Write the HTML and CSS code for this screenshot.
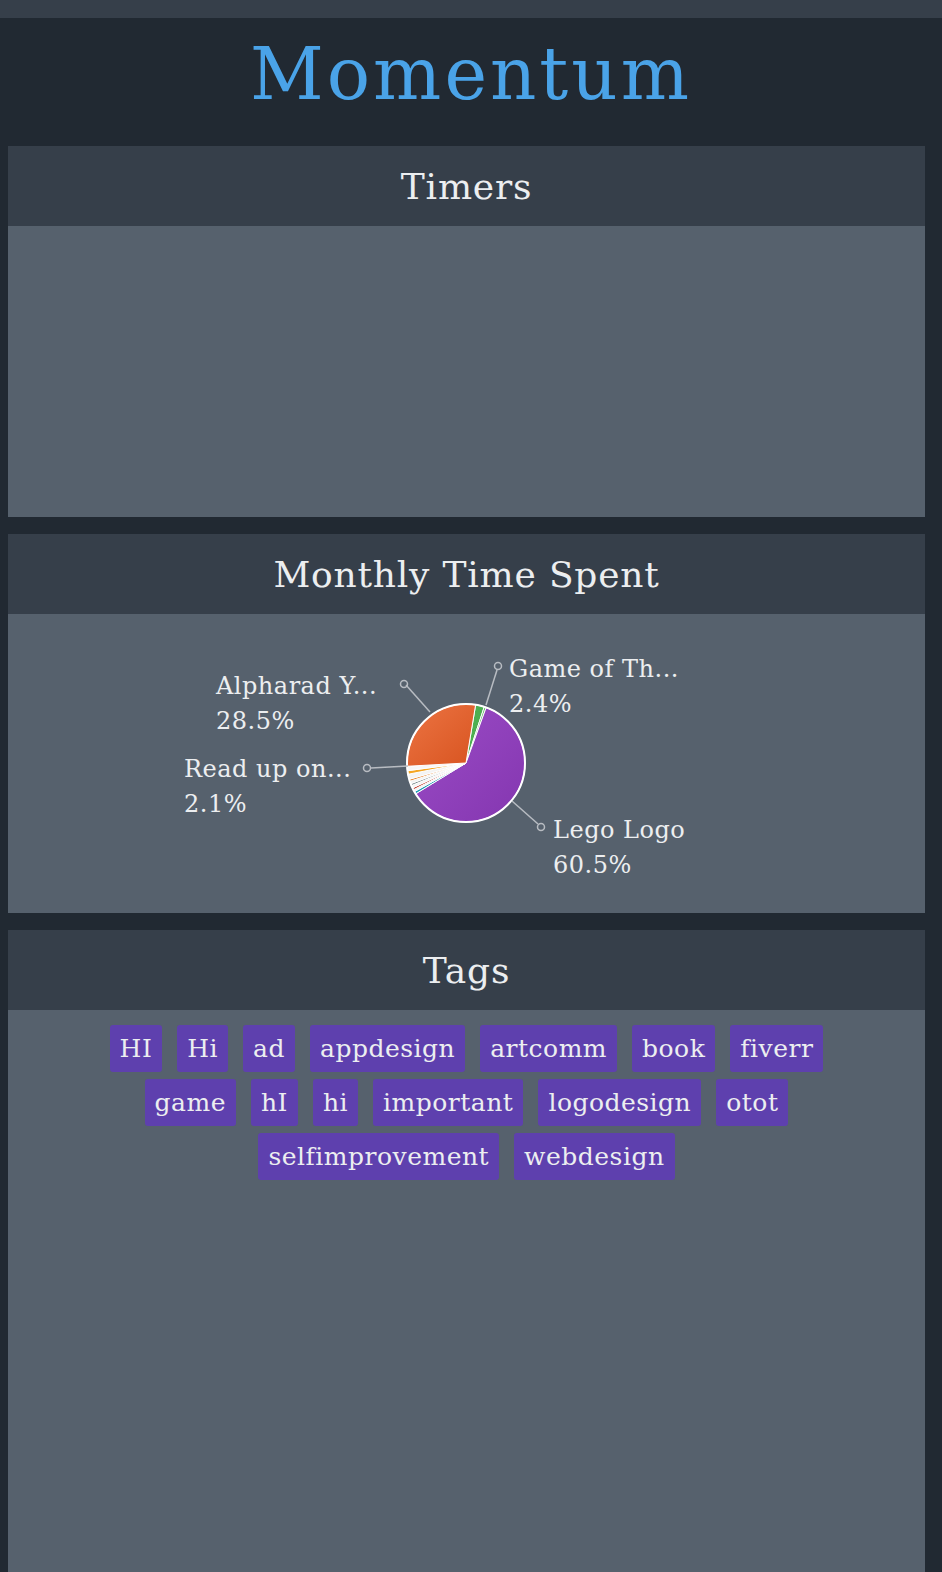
FILE: index.html
```html
<!DOCTYPE html>
<html>
<head>
<meta charset="utf-8">
<link rel="stylesheet" href="styles.css">
</head>
<body>
<div class="topbar"></div>
<header class="brand"><h1 class="brand-title">Momentum</h1></header>
<main class="panels">
  <section class="panel">
    <h2 class="panel-head">Timers</h2>
    <div class="panel-body timers-body"></div>
  </section>
  <section class="panel">
    <h2 class="panel-head">Monthly Time Spent</h2>
    <div class="panel-body chart-body">
      <svg class="pie" width="917" height="299" viewBox="0 0 917 299">
        <defs>
          <linearGradient id="gPurple" x1="0" y1="0" x2="1" y2="1">
            <stop offset="0" stop-color="#9b4cc6"/>
            <stop offset="1" stop-color="#8436b0"/>
          </linearGradient>
          <linearGradient id="gOrange" x1="0" y1="0" x2="1" y2="1">
            <stop offset="0" stop-color="#ec7443"/>
            <stop offset="1" stop-color="#d85420"/>
          </linearGradient>
        </defs>
        <g id="slices"></g>
        <g class="leaders" stroke="#b8bcc2" stroke-width="1.5" fill="none">
          <line x1="422" y1="98" x2="398" y2="71"/>
          <circle cx="396" cy="70" r="3.5"/>
          <line x1="478" y1="91" x2="489" y2="56"/>
          <circle cx="490" cy="52" r="3.5"/>
          <line x1="400" y1="152" x2="363" y2="154"/>
          <circle cx="359" cy="154" r="3.5"/>
          <line x1="504" y1="187" x2="530" y2="210"/>
          <circle cx="533" cy="213" r="3.5"/>
        </g>
        <g class="labels">
          <text x="208" y="80">Alpharad Y...</text>
          <text x="208" y="115">28.5%</text>
          <text x="501" y="63">Game of Th...</text>
          <text x="501" y="98">2.4%</text>
          <text x="176" y="163">Read up on...</text>
          <text x="176" y="198">2.1%</text>
          <text x="545" y="224">Lego Logo</text>
          <text x="545" y="259">60.5%</text>
        </g>
      </svg>
    </div>
  </section>
  <section class="panel">
    <h2 class="panel-head">Tags</h2>
    <div class="panel-body tags-body">
      <div class="tags">
        <span class="tag">HI</span><span class="tag">Hi</span><span class="tag">ad</span><span class="tag">appdesign</span><span class="tag">artcomm</span><span class="tag">book</span><span class="tag">fiverr</span><span class="tag">game</span><span class="tag">hI</span><span class="tag">hi</span><span class="tag">important</span><span class="tag">logodesign</span><span class="tag">otot</span><span class="tag">selfimprovement</span><span class="tag">webdesign</span>
      </div>
    </div>
  </section>
</main>
<script>
(function(){
  var cx=458, cy=149, r=59;
  var data=[
    {a:9.4, b:18.0, c:"#4caf50"},
    {a:18.0, b:20.0, c:"#66bb6a"},
    {a:20.0, b:238.5, c:"url(#gPurple)"},
    {a:238.5, b:241, c:"#1e9bb5"},
    {a:241, b:243, c:"#f2f2f2"},
    {a:243, b:245, c:"#c0392b"},
    {a:245, b:247.5, c:"#f2f2f2"},
    {a:247.5, b:249.5, c:"#7f8c8d"},
    {a:249.5, b:252, c:"#f2f2f2"},
    {a:252, b:254, c:"#e67e22"},
    {a:254, b:259, c:"#f4f4f4"},
    {a:259, b:262.5, c:"#f5a623"},
    {a:262.5, b:266.8, c:"#f7f7f7"},
    {a:266.8, b:369.4, c:"url(#gOrange)"}
  ];
  function pt(deg){var t=(deg-90)*Math.PI/180;return [cx+r*Math.cos(t), cy+r*Math.sin(t)];}
  var g=document.getElementById("slices"), ns="http://www.w3.org/2000/svg";
  data.forEach(function(d){
    var p1=pt(d.a), p2=pt(d.b), large=(d.b-d.a)>180?1:0;
    var p=document.createElementNS(ns,"path");
    p.setAttribute("d","M"+cx+","+cy+" L"+p1[0]+","+p1[1]+" A"+r+","+r+" 0 "+large+" 1 "+p2[0]+","+p2[1]+" Z");
    p.setAttribute("fill",d.c);
    p.setAttribute("stroke","#ffffff");
    p.setAttribute("stroke-width","1");
    g.appendChild(p);
  });
  var c=document.createElementNS(ns,"circle");
  c.setAttribute("cx",cx);c.setAttribute("cy",cy);c.setAttribute("r",r);
  c.setAttribute("fill","none");c.setAttribute("stroke","#ffffff");c.setAttribute("stroke-width","2");
  g.appendChild(c);
})();
</script>
</body>
</html>
```

FILE: styles.css
```css
html, body {
  margin: 0;
  padding: 0;
}
body {
  background: #212932;
  font-family: "DejaVu Serif", "Liberation Serif", serif;
  color: #eceef0;
  min-height: 1572px;
}
.topbar {
  height: 18px;
  background: #363f4a;
}
.brand {
  height: 128px;
  display: flex;
  align-items: center;
  justify-content: center;
}
.brand-title {
  margin: 0;
  font-weight: normal;
  font-size: 72px;
  letter-spacing: 3px;
  color: #4aa3e8;
  line-height: 1;
  padding-bottom: 16px;
}
.panels {
  display: flex;
  flex-direction: column;
  gap: 17px;
  margin: 0 17px 0 8px;
}
.panel-head {
  margin: 0;
  height: 80px;
  background: #363f4a;
  display: flex;
  align-items: center;
  justify-content: center;
  font-weight: normal;
  font-size: 36px;
  letter-spacing: 0.8px;
  color: #eceef0;
}
.panel-body {
  background: #56616d;
}
.timers-body {
  height: 291px;
}
.chart-body {
  height: 299px;
}
.pie {
  display: block;
}
.labels text {
  font-family: "DejaVu Serif", "Liberation Serif", serif;
  font-size: 24px;
  letter-spacing: 0.5px;
  fill: #eceef0;
}
.tags-body {
  height: 580px;
  padding-top: 15px;
  box-sizing: border-box;
}
.tags {
  display: flex;
  flex-wrap: wrap;
  justify-content: center;
  column-gap: 15px;
  row-gap: 7px;
  padding: 0 90px;
}
.tag {
  background: #5e40ae;
  color: #eceef0;
  border-radius: 3px;
  font-size: 25px;
  letter-spacing: 0.5px;
  height: 47px;
  line-height: 47px;
  padding: 0 10px;
}
```
